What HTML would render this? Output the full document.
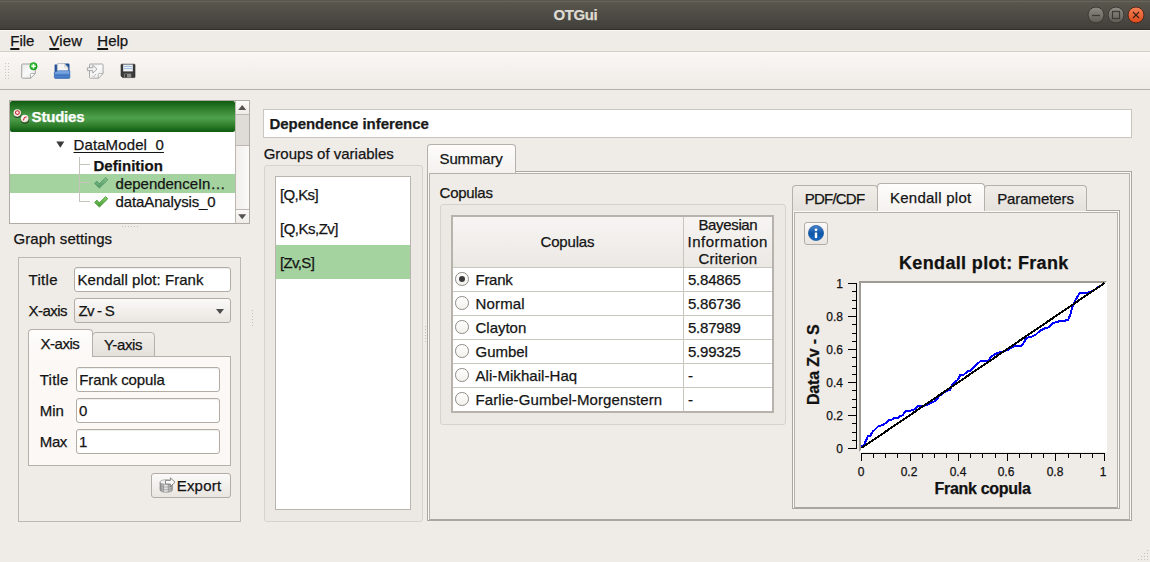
<!DOCTYPE html>
<html lang="en">
<head>
<meta charset="utf-8">
<title>OTGui</title>
<style>
*{box-sizing:border-box;margin:0;padding:0}
html,body{width:1150px;height:562px;overflow:hidden;background:#efebe7}
body{position:relative;font-family:"Liberation Sans",sans-serif;font-size:15px;color:#141414}
.a{position:absolute}
.t{position:absolute;white-space:nowrap;line-height:20px;height:20px;-webkit-text-stroke:0.25px currentColor}
.b{font-weight:bold}
#titlebar{left:0;top:0;width:1150px;height:30px;background:linear-gradient(#5b584f,#4e4c45 50%,#403f3a);border-bottom:1px solid #2f2e2a}
.wb{position:absolute;top:7px;width:16px;height:16px;border-radius:50%;border:1px solid #3a3934;background:linear-gradient(#8a8880,#5e5c55)}
#toolbar{left:0;top:51px;width:1150px;height:39px;background:linear-gradient(#faf7f4,#efebe7);border-top:1px solid #d2cec8;border-bottom:1px solid #b3afa9}
.inp{position:absolute;background:#fff;border:1px solid #b2aca4;border-radius:3px;box-shadow:inset 0 1px 1px rgba(0,0,0,.07)}
.btn{position:absolute;border:1px solid #b2aca4;border-radius:3px;background:linear-gradient(#fbfaf9,#e9e5e0)}
.tab{position:absolute;border:1px solid #b5b0a9;border-bottom:none;border-radius:4px 4px 0 0;background:linear-gradient(#f1eeea,#e4e0db)}
.tab.sel{background:linear-gradient(#fefdfc,#f4f1ee)}
.gb{position:absolute;border:1px solid #d6d2cc;border-radius:3px;background:#ece8e4}
.rd{position:absolute;width:13.6px;height:13.6px;margin-top:.2px;border-radius:50%;border:1px solid #8f8b85;background:linear-gradient(#fff,#f2f0ed)}
.rd.sel:after{content:"";position:absolute;left:2.8px;top:2.8px;width:6px;height:6px;border-radius:50%;background:#3a3a3a}
.tk{font-size:12px;color:#111}
u{text-decoration-thickness:1.5px;text-underline-offset:2px}
</style>
</head>
<body>
<!-- TITLE BAR -->
<div id="titlebar" class="a">
  <div class="t b" style="left:553.6px;top:5px;color:#dfdbd2;letter-spacing:-0.41px">OTGui</div>
  <svg class="a" style="left:1080px;top:0" width="70" height="30" viewBox="1080 0 70 30">
  <defs><linearGradient id="wg" x1="0" y1="0" x2="0" y2="1"><stop offset="0" stop-color="#8e8c84"/><stop offset="1" stop-color="#5d5b54"/></linearGradient>
  <linearGradient id="wr" x1="0" y1="0" x2="0" y2="1"><stop offset="0" stop-color="#f58357"/><stop offset="1" stop-color="#dd481a"/></linearGradient></defs>
  <circle cx="1096" cy="15" r="8" fill="url(#wg)" stroke="#393833" stroke-width="1"/>
  <circle cx="1116" cy="15" r="8" fill="url(#wg)" stroke="#393833" stroke-width="1"/>
  <circle cx="1136" cy="15" r="8" fill="url(#wr)" stroke="#4a2a1c" stroke-width="1"/>
  <path d="M1092 15.5H1100" stroke="#3b3a35" stroke-width="1.2"/>
  <rect x="1112.5" y="11.5" width="7" height="7" fill="none" stroke="#3b3a35" stroke-width="1.2"/>
  <path d="M1133 12L1139 18M1139 12L1133 18" stroke="#3a2018" stroke-width="1.2"/>
  </svg>
</div>
<!-- MENU -->
<div class="t" style="left:10.3px;top:31px;letter-spacing:-0.07px"><u>F</u>ile</div>
<div class="t" style="left:49.3px;top:31px;letter-spacing:0.21px"><u>V</u>iew</div>
<div class="t" style="left:97.3px;top:31px;letter-spacing:-0.02px"><u>H</u>elp</div>
<!-- TOOLBAR -->
<div id="toolbar" class="a"></div>
<svg class="a" style="left:0;top:52px" width="150" height="38" viewBox="0 52 150 38">
<defs>
<linearGradient id="pg" x1="0" y1="0" x2="1" y2="1"><stop offset="0" stop-color="#e6e6e6"/><stop offset="0.5" stop-color="#fafafa"/><stop offset="1" stop-color="#e2e2e2"/></linearGradient>
<linearGradient id="fb" x1="0" y1="0" x2="0" y2="1"><stop offset="0" stop-color="#8db6ea"/><stop offset="0.5" stop-color="#5a8fd4"/><stop offset="1" stop-color="#3f74c0"/></linearGradient>
<radialGradient id="gr" cx="0.4" cy="0.35" r="0.7"><stop offset="0" stop-color="#4fd84a"/><stop offset="1" stop-color="#0a9a12"/></radialGradient>
</defs>
<g fill="#c9c5bf"><rect x="5" y="63" width="1" height="1"/><rect x="8" y="63" width="1" height="1"/><rect x="5" y="66" width="1" height="1"/><rect x="8" y="66" width="1" height="1"/><rect x="5" y="69" width="1" height="1"/><rect x="8" y="69" width="1" height="1"/><rect x="5" y="72" width="1" height="1"/><rect x="8" y="72" width="1" height="1"/><rect x="5" y="75" width="1" height="1"/><rect x="8" y="75" width="1" height="1"/><rect x="5" y="78" width="1" height="1"/><rect x="8" y="78" width="1" height="1"/></g>
<!-- new -->
<path d="M22.5 64H34.5a.8.8 0 0 1 .8.8V73.5L30.5 78.2H22.5a.8.8 0 0 1-.8-.8V64.8a.8.8 0 0 1 .8-.8z" fill="url(#pg)" stroke="#a3a3a3" stroke-width="1"/>
<path d="M35.3 73.5H31.3a.8.8 0 0 0-.8.8V78.2z" fill="#fdfdfd" stroke="#a3a3a3" stroke-width="0.8"/>
<circle cx="33.5" cy="66.3" r="3.7" fill="url(#gr)" stroke="#0c8f14" stroke-width="0.5"/>
<path d="M31.3 66.3H35.7M33.5 64.1V68.5" stroke="#fff" stroke-width="1.4"/>
<!-- open -->
<path d="M54.6 64.5H57l1 -1H68.5a1 1 0 0 1 1 1V77H54.6z" fill="#1f4f97"/>
<path d="M57.3 63.6H64.2L68 67.4V75H57.3z" fill="#f4f4f4" stroke="#b9b9b9" stroke-width="0.6"/>
<path d="M64.2 63.6V67.4H68z" fill="#d5d5d5"/>
<path d="M54.4 72.2L58.5 70.8H69.8V77.6a.8.8 0 0 1-.8.8H55.2a.8.8 0 0 1-.8-.8z" fill="url(#fb)" stroke="#3568b2" stroke-width="0.7"/>
<path d="M54.8 75.2H69.5" stroke="#3c6fb9" stroke-width="1.2"/>
<!-- import -->
<path d="M90.3 64H102.3a.8.8 0 0 1 .8.8V73.5L98.3 78.2H90.3a.8.8 0 0 1-.8-.8V64.8a.8.8 0 0 1 .8-.8z" fill="url(#pg)" stroke="#a9a9a9" stroke-width="1"/>
<path d="M103.1 73.5H99.1a.8.8 0 0 0-.8.8V78.2z" fill="#fdfdfd" stroke="#a9a9a9" stroke-width="0.8"/>
<path d="M87.3 67.8H92.8V65.2L97 69.2L92.8 73.2V70.6H87.3z" fill="#f4f4f4" stroke="#9f9f9f" stroke-width="0.9"/>
<path d="M92 75.5l1.5 1.5 2.5-3" fill="none" stroke="#b5b5b5" stroke-width="0.9"/>
<!-- save -->
<path d="M121.6 64.2H134.4a.6.6 0 0 1 .6.6V77a.6.6 0 0 1-.6.6H122.6L121 76V64.8a.6.6 0 0 1 .6-.6z" fill="#3b3b3b" stroke="#262626" stroke-width="0.6"/>
<rect x="123.2" y="64.6" width="9.6" height="6.8" fill="#f1f4f8"/>
<path d="M124 66.4H132M124 68.6H132" stroke="#8fb0d8" stroke-width="0.9"/>
<rect x="124.2" y="73.6" width="7" height="4" fill="#8c8c8c"/>
<rect x="125" y="74.2" width="2" height="3.2" fill="#3b3b3b"/>
</svg>

<!-- TREE -->
<div class="a" style="left:9px;top:100px;width:241px;height:124px;background:#fff;border:1px solid #b0aba4"></div>
<div class="a" style="left:10px;top:101px;width:225px;height:31px;background:linear-gradient(#0f5910,#2b7a29 22%,#50a14c 55%,#2b7b29 82%,#0d590f);border-radius:2px"></div>
<div class="t b" style="left:31.6px;top:107px;color:#fff;letter-spacing:-0.21px">Studies</div>
<div class="a" style="left:235px;top:101px;width:14px;height:122px;background:linear-gradient(90deg,#f1eeeb,#fbfaf9);border-left:1px solid #bdb8b1"></div>
<div class="a" style="left:235px;top:101px;width:14px;height:14px;background:linear-gradient(#fbfaf9,#efece8);border:1px solid #bdb8b1;border-top:none;border-right:none"></div>
<div class="a" style="left:235px;top:114px;width:14px;height:32px;background:#dfdbd7;border:1px solid #bdb8b1;border-right:none"></div>
<div class="a" style="left:235px;top:209px;width:14px;height:14px;background:linear-gradient(#fbfaf9,#efece8);border:1px solid #bdb8b1;border-bottom:none;border-right:none"></div>
<div class="a" style="left:10px;top:174px;width:225px;height:19px;background:#a5d3a0"></div>
<div class="t" style="left:73.5px;top:135px;letter-spacing:0.11px"><u style="text-decoration-thickness:1px">DataModel_0</u></div>
<div class="t b" style="left:93.5px;top:156px;letter-spacing:0.03px">Definition</div>
<div class="t" style="left:115.6px;top:174px;letter-spacing:-0.02px">dependenceIn…</div>
<div class="t" style="left:115.6px;top:192px;letter-spacing:-0.13px">dataAnalysis_0</div>

<svg class="a" style="left:10px;top:101px" width="240" height="122" viewBox="10 101 240 122">
<defs><radialGradient id="bl" cx="0.4" cy="0.35" r="0.75"><stop offset="0" stop-color="#fff"/><stop offset="0.7" stop-color="#ece8dc"/><stop offset="1" stop-color="#8d8a78"/></radialGradient>
<linearGradient id="ck" x1="0" y1="0" x2="0" y2="1"><stop offset="0" stop-color="#8fd66e"/><stop offset="1" stop-color="#3f9a2c"/></linearGradient>
<linearGradient id="ck2" x1="0" y1="0" x2="0" y2="1"><stop offset="0" stop-color="#86c48e"/><stop offset="1" stop-color="#4f9866"/></linearGradient></defs>
<circle cx="17.5" cy="114.1" r="3.9" fill="#152a13" opacity=".7"/><circle cx="17.3" cy="113.1" r="3.8" fill="url(#bl)"/><circle cx="17.4" cy="112.6" r="1.9" fill="none" stroke="#d4202a" stroke-width="1.1"/>
<circle cx="25" cy="119.7" r="4.1" fill="#152a13" opacity=".7"/><circle cx="24.8" cy="118.6" r="3.9" fill="url(#bl)"/><path d="M23.4 120.4L24.4 117.6L26.6 116.8" fill="none" stroke="#d4202a" stroke-width="1.1"/>
<path d="M56.3 141.5H64.3L60.3 147.8z" fill="#3a3a3a"/>
<path d="M79.5 157V201.5H89.5M79.5 164.5H89.5M79.5 182.5H89.5" fill="none" stroke="#c6c2bc" stroke-width="1" shape-rendering="crispEdges"/>
<path d="M94.6 183.4L97 181.2L99.4 183.8L105.6 177.6L107.8 179.8L99.4 188z" fill="url(#ck2)" stroke="#4a8f62" stroke-width="0.8"/>
<path d="M94.6 202.4L97 200.2L99.4 202.8L105.6 196.6L107.8 198.8L99.4 207z" fill="url(#ck)" stroke="#3a8a2a" stroke-width="0.8"/>
<path d="M238.2 110H246.2L242.2 105z" fill="#55534e"/>
<path d="M238.2 214.2H246.2L242.2 219.2z" fill="#55534e"/>
</svg>
<!-- GRAPH SETTINGS -->
<div class="t" style="left:13.4px;top:229px;letter-spacing:0.09px">Graph settings</div>
<div class="a" style="left:18px;top:257px;width:223px;height:265px;border:1px solid #bdb8b1"></div>
<div class="t" style="left:28.5px;top:270px;letter-spacing:0.30px">Title</div>
<div class="inp" style="left:74px;top:267px;width:157px;height:25px"></div>
<div class="t" style="left:77.5px;top:270px;letter-spacing:0.05px">Kendall plot: Frank</div>
<div class="t" style="left:28.5px;top:301px;letter-spacing:-0.53px">X-axis</div>
<div class="btn" style="left:74px;top:298px;width:157px;height:25px"></div>
<div class="t" style="left:78.6px;top:301px;letter-spacing:-0.77px">Zv - S</div>
<div class="a" style="left:215.7px;top:308.5px;width:0;height:0;border-left:4.3px solid transparent;border-right:4.3px solid transparent;border-top:5px solid #4d4d4d"></div>
<div class="a" style="left:28px;top:356px;width:203px;height:110px;background:#fbf8f5;border:1px solid #b5b0a9"></div>
<div class="tab" style="left:92px;top:332px;width:63px;height:25px;border-bottom:1px solid #b5b0a9"></div>
<div class="tab sel" style="left:28px;top:329px;width:65px;height:28px;background:linear-gradient(#fefdfc,#fbf8f5)"></div>
<div class="t" style="left:40.5px;top:334px;letter-spacing:-0.48px">X-axis</div>
<div class="t" style="left:104.0px;top:335px;letter-spacing:-0.34px">Y-axis</div>
<div class="t" style="left:39.8px;top:370px;letter-spacing:0.22px">Title</div>
<div class="inp" style="left:76px;top:367px;width:144px;height:25px"></div>
<div class="t" style="left:79.3px;top:370px;letter-spacing:-0.11px">Frank copula</div>
<div class="t" style="left:39.8px;top:401px;letter-spacing:-0.12px">Min</div>
<div class="inp" style="left:76px;top:398px;width:144px;height:25px"></div>
<div class="t" style="left:79px;top:401px">0</div>
<div class="t" style="left:39.8px;top:432px;letter-spacing:-0.38px">Max</div>
<div class="inp" style="left:76px;top:429px;width:144px;height:25px"></div>
<div class="t" style="left:79px;top:432px">1</div>
<div class="btn" style="left:151px;top:473px;width:80px;height:25px"></div>
<div class="t" style="left:176.7px;top:476px;letter-spacing:0.21px">Export</div>

<!-- RIGHT -->
<div class="a" style="left:263px;top:109px;width:869px;height:29px;background:#fff;border:1px solid #c9c5bf"></div>
<div class="t b" style="left:269.4px;top:114px;color:#1a1a1a;letter-spacing:-0.03px">Dependence inference</div>
<div class="t" style="left:263.7px;top:144px;letter-spacing:-0.00px">Groups of variables</div>
<div class="gb" style="left:264px;top:165px;width:159px;height:357px"></div>
<div class="a" style="left:275px;top:176px;width:136px;height:334px;background:#fff;border:1px solid #b9b4ad"></div>
<div class="a" style="left:276px;top:245px;width:134px;height:34px;background:#a5d3a0"></div>
<div class="t" style="left:280.0px;top:185px;letter-spacing:-0.61px">[Q,Ks]</div>
<div class="t" style="left:280.0px;top:219px;letter-spacing:-0.50px">[Q,Ks,Zv]</div>
<div class="t" style="left:280.0px;top:253px;letter-spacing:-0.64px">[Zv,S]</div>

<!-- SUMMARY TAB -->
<div class="a" style="left:427px;top:171px;width:705px;height:350px;border:1px solid #aaa59f;border-bottom-width:2px"></div>
<div class="a" style="left:428px;top:172px;width:703px;height:348px;border:1px solid #fbfaf9;border-bottom:none"></div>
<div class="a" style="left:429px;top:173px;width:701px;height:347px;border:1px solid #b5b0a9;border-bottom:none"></div>
<div class="tab sel" style="left:427px;top:144px;width:89px;height:29px"></div>
<div class="t" style="left:439.6px;top:149px;letter-spacing:-0.17px">Summary</div>
<div class="t" style="left:439.6px;top:183px;letter-spacing:-0.29px">Copulas</div>
<div class="gb" style="left:440px;top:204px;width:346px;height:221px"></div>

<!-- TABLE -->
<div class="a" style="left:451px;top:215px;width:323px;height:198px;background:#fff;border:2px solid #b7b2ab"></div>
<div class="a" style="left:453px;top:217px;width:319px;height:50px;background:linear-gradient(#f7f5f3,#ebe8e4)"></div>

<div class="t" style="left:540.5px;top:232px;letter-spacing:-0.18px">Copulas</div>
<div class="t" style="left:698.4px;top:216px;line-height:17px;letter-spacing:-0.34px">Bayesian</div>
<div class="t" style="left:687.5px;top:233px;line-height:17px;letter-spacing:0.49px">Information</div>
<div class="t" style="left:698.4px;top:250px;line-height:17px;letter-spacing:0.26px">Criterion</div>
<div class="a" style="left:683px;top:217px;width:1px;height:194px;background:#c9c5bf"></div>
<div class="a" style="left:453px;top:267px;width:319px;height:1px;background:#c9c5bf"></div>
<div class="rd sel" style="left:455px;top:272px"></div>
<div class="t" style="left:475.5px;top:270px;letter-spacing:-0.27px">Frank</div>
<div class="t" style="left:688.0px;top:270px;letter-spacing:-0.22px">5.84865</div>
<div class="a" style="left:453px;top:291px;width:319px;height:1px;background:#c9c5bf"></div>
<div class="rd" style="left:455px;top:296px"></div>
<div class="t" style="left:475.5px;top:294px;letter-spacing:0.16px">Normal</div>
<div class="t" style="left:688.0px;top:294px;letter-spacing:-0.22px">5.86736</div>
<div class="a" style="left:453px;top:315px;width:319px;height:1px;background:#c9c5bf"></div>
<div class="rd" style="left:455px;top:320px"></div>
<div class="t" style="left:475.5px;top:318px;letter-spacing:-0.01px">Clayton</div>
<div class="t" style="left:688.0px;top:318px;letter-spacing:-0.22px">5.87989</div>
<div class="a" style="left:453px;top:339px;width:319px;height:1px;background:#c9c5bf"></div>
<div class="rd" style="left:455px;top:344px"></div>
<div class="t" style="left:475.5px;top:342px;letter-spacing:-0.04px">Gumbel</div>
<div class="t" style="left:688.0px;top:342px;letter-spacing:-0.22px">5.99325</div>
<div class="a" style="left:453px;top:363px;width:319px;height:1px;background:#c9c5bf"></div>
<div class="rd" style="left:455px;top:368px"></div>
<div class="t" style="left:475.5px;top:366px;letter-spacing:0.06px">Ali-Mikhail-Haq</div>
<div class="t" style="left:688px;top:366px">-</div>
<div class="a" style="left:453px;top:387px;width:319px;height:1px;background:#c9c5bf"></div>
<div class="rd" style="left:455px;top:392px"></div>
<div class="t" style="left:475.5px;top:390px;letter-spacing:0.10px">Farlie-Gumbel-Morgenstern</div>
<div class="t" style="left:688px;top:390px">-</div>
<!-- INNER TABS -->
<div class="a" style="left:792px;top:210px;width:328px;height:299px;border:1px solid #aaa59f;border-bottom-width:2px"></div>
<div class="a" style="left:793px;top:211px;width:326px;height:297px;border:1px solid #fbfaf9;border-bottom:none"></div>
<div class="a" style="left:794px;top:212px;width:324px;height:296px;border:1px solid #b5b0a9;border-bottom:none"></div>
<div class="tab" style="left:792px;top:185px;width:86px;height:26px"></div>
<div class="tab" style="left:984px;top:185px;width:103px;height:26px"></div>
<div class="tab sel" style="left:877px;top:183px;width:108px;height:28px;background:linear-gradient(#fefdfc,#f5f2ef)"></div>
<div class="t" style="left:804.8px;top:189px;letter-spacing:-0.79px">PDF/CDF</div>
<div class="t" style="left:890.0px;top:188px;letter-spacing:0.25px">Kendall plot</div>
<div class="t" style="left:997.2px;top:189px;letter-spacing:-0.09px">Parameters</div>
<div class="btn" style="left:804px;top:222px;width:24px;height:23px"></div>

<svg class="a" style="left:804px;top:222px" width="24" height="23" viewBox="804 222 24 23">
<defs><linearGradient id="ib" x1="0" y1="0" x2="0" y2="1"><stop offset="0" stop-color="#4a86cb"/><stop offset="0.55" stop-color="#0d55a8"/><stop offset="1" stop-color="#1f6dc8"/></linearGradient></defs>
<circle cx="816" cy="233" r="7.6" fill="url(#ib)" stroke="#0a4a96" stroke-width="0.6"/>
<circle cx="816" cy="229.8" r="1.4" fill="#fff"/><rect x="814.8" y="232.4" width="2.4" height="5.6" rx="0.6" fill="#fff"/>
</svg>
<svg class="a" style="left:158px;top:476px" width="20" height="18" viewBox="158 476 20 18">
<defs><linearGradient id="cy" x1="0" y1="0" x2="1" y2="0"><stop offset="0" stop-color="#8c8c8c"/><stop offset="0.45" stop-color="#e9e9e9"/><stop offset="1" stop-color="#9a9a9a"/></linearGradient></defs>
<path d="M160 482V490a6.2 2.3 0 0 0 12.4 0V482z" fill="url(#cy)" stroke="#7d7d7d" stroke-width="0.6"/>
<ellipse cx="166.2" cy="482" rx="6.2" ry="2.3" fill="#f1f1f1" stroke="#8a8a8a" stroke-width="0.6"/>
<path d="M160 484.8a6.2 2.3 0 0 0 12.4 0M160 487.4a6.2 2.3 0 0 0 12.4 0M163.5 484V492M168.5 484.2V492.2" fill="none" stroke="#8f8f8f" stroke-width="0.6"/>
<path d="M165.5 480.4H170.4V477.8L175 482.2L170.4 486.6V484H165.5z" fill="#fbfbfb" stroke="#6f6f6f" stroke-width="0.8"/>
</svg>
<!-- PLOT -->
<div class="t b" style="left:899.0px;top:253px;font-size:18px;color:#111;letter-spacing:0.35px">Kendall plot: Frank</div>
<div class="a" style="left:859px;top:281px;width:248px;height:171px;background:#fff;border:2px solid #9f9b95;border-right-color:#fff;border-bottom-color:#fff"></div>
<div class="t b" style="left:934.5px;top:479px;font-size:16px;color:#111;letter-spacing:-0.30px">Frank copula</div>
<svg class="a" style="left:0;top:0" width="1150" height="562" viewBox="0 0 1150 562" shape-rendering="crispEdges">
<polyline points="861.4,446.4 864.1,444.8 867.9,436.1 870.1,436.1 872.4,432.0 878.4,426.2 882.2,425.2 886.0,422.9 888.6,419.9 891.3,419.9 894.3,418.1 898.8,417.6 900.4,415.7 902.6,415.4 905.7,410.8 911.7,410.5 914.7,409.3 917.7,406.0 923.8,406.0 928.3,404.5 933.6,401.8 936.6,399.5 939.7,395.7 945.7,391.2 950.3,390.0 951.8,385.1 957.8,379.8 960.1,375.3 963.9,374.5 967.6,371.5 970.0,371.1 974.4,366.6 980.7,360.9 987.8,360.9 992.2,355.9 997.6,352.7 1002.9,351.9 1008.2,349.7 1014.5,345.8 1021.6,345.8 1026.9,337.6 1030.5,337.3 1035.8,334.6 1040.3,330.5 1044.7,328.4 1048.3,327.5 1052.7,323.0 1057.2,322.1 1059.8,320.9 1064.3,320.9 1068.4,319.5 1070.5,314.1 1072.3,307.0 1075.0,300.8 1079.8,292.8 1085.6,292.8 1089.2,292.4 1092.8,291.0 1100.0,286.0" fill="none" stroke="#0000ff" stroke-width="2" stroke-linejoin="round"/>
<line x1="861.5" y1="448" x2="1104.5" y2="283" stroke="#000" stroke-width="2"/>
<path d="M856.5 283V449M848 283.5H857M852 291.5H857M852 300.5H857M852 308.5H857M848 316.5H857M852 324.5H857M852 333.5H857M852 341.5H857M848 349.5H857M852 357.5H857M852 366.5H857M852 374.5H857M848 382.5H857M852 390.5H857M852 399.5H857M852 407.5H857M848 415.5H857M852 423.5H857M852 432.5H857M852 440.5H857M848 448.5H857M861 453.5H1105M861.5 453V461M873.5 453V458M885.5 453V458M897.5 453V458M910.5 453V461M922.5 453V458M934.5 453V458M946.5 453V458M958.5 453V461M970.5 453V458M982.5 453V458M995.5 453V458M1007.5 453V461M1019.5 453V458M1031.5 453V458M1043.5 453V458M1055.5 453V461M1068.5 453V458M1080.5 453V458M1092.5 453V458M1104.5 453V461" stroke="#000" stroke-width="1" fill="none"/>
</svg>
<div class="t tk" style="left:800px;width:43px;text-align:right;top:274px">1</div>
<div class="t tk" style="left:800px;width:43px;text-align:right;top:307px">0.8</div>
<div class="t tk" style="left:800px;width:43px;text-align:right;top:340px">0.6</div>
<div class="t tk" style="left:800px;width:43px;text-align:right;top:373px">0.4</div>
<div class="t tk" style="left:800px;width:43px;text-align:right;top:406px">0.2</div>
<div class="t tk" style="left:800px;width:43px;text-align:right;top:439px">0</div>
<div class="t tk" style="left:841px;width:40px;text-align:center;top:462px">0</div>
<div class="t tk" style="left:889px;width:40px;text-align:center;top:462px">0.2</div>
<div class="t tk" style="left:938px;width:40px;text-align:center;top:462px">0.4</div>
<div class="t tk" style="left:986px;width:40px;text-align:center;top:462px">0.6</div>
<div class="t tk" style="left:1035px;width:40px;text-align:center;top:462px">0.8</div>
<div class="t tk" style="left:1083px;width:40px;text-align:center;top:462px">1</div>
<div class="t b" style="left:774px;top:355px;width:80px;text-align:center;font-size:16px;color:#111;letter-spacing:-0.2px;transform:rotate(-90deg)">Data Zv - S</div>
<div class="a" style="left:0;top:1px;width:1150px;height:1px;background:#67645b"></div>
<div class="a" style="left:0;top:30px;width:1150px;height:1px;background:#f8f6f3"></div>
<svg class="a" style="left:0;top:0;pointer-events:none" width="1150" height="562" viewBox="0 0 1150 562" shape-rendering="crispEdges">
<g fill="#c3bfb9"><rect x="122" y="226" width="1" height="1"/><rect x="125" y="226" width="1" height="1"/><rect x="128" y="226" width="1" height="1"/><rect x="131" y="226" width="1" height="1"/><rect x="134" y="226" width="1" height="1"/><rect x="137" y="226" width="1" height="1"/>
<rect x="252" y="310" width="1" height="1"/><rect x="252" y="313" width="1" height="1"/><rect x="252" y="316" width="1" height="1"/><rect x="252" y="319" width="1" height="1"/><rect x="252" y="322" width="1" height="1"/><rect x="252" y="325" width="1" height="1"/>
<rect x="425" y="326" width="1" height="1"/><rect x="425" y="329" width="1" height="1"/><rect x="425" y="332" width="1" height="1"/><rect x="425" y="335" width="1" height="1"/><rect x="425" y="338" width="1" height="1"/><rect x="425" y="341" width="1" height="1"/>
<rect x="1147" y="550" width="1" height="1"/><rect x="1144" y="553" width="1" height="1"/><rect x="1147" y="553" width="1" height="1"/><rect x="1141" y="556" width="1" height="1"/><rect x="1144" y="556" width="1" height="1"/><rect x="1147" y="556" width="1" height="1"/><rect x="1138" y="559" width="1" height="1"/><rect x="1141" y="559" width="1" height="1"/><rect x="1144" y="559" width="1" height="1"/><rect x="1147" y="559" width="1" height="1"/></g>
</svg>
</body>
</html>
